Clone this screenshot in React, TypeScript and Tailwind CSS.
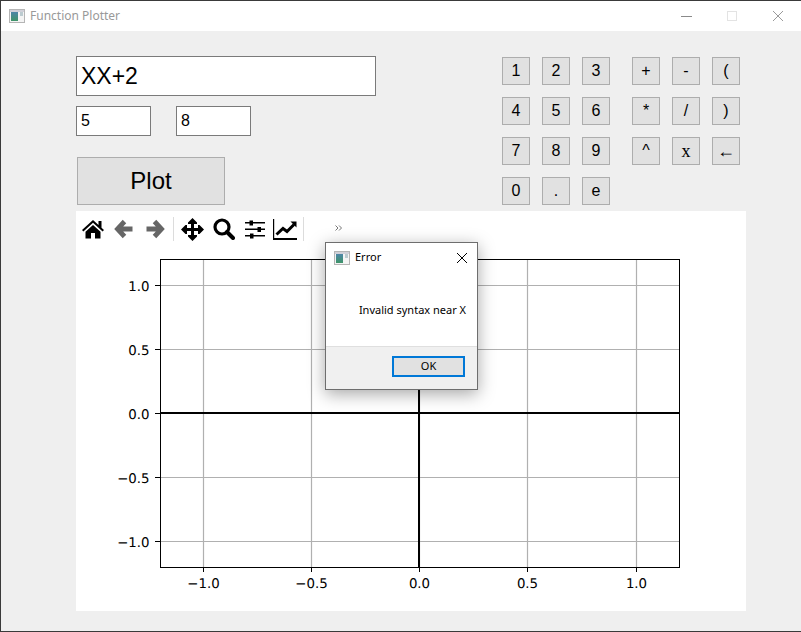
import type { ReactNode } from 'react';

const leftKeys = ['1', '2', '3', '4', '5', '6', '7', '8', '9', '0', '.', 'e'];
const rightKeys = ['+', '-', '(', '*', '/', ')', '^', 'x', '←'];
const xTicks = [
  { x: 203.5, label: '−1.0' },
  { x: 311.5, label: '−0.5' },
  { x: 419.5, label: '0.0' },
  { x: 527.5, label: '0.5' },
  { x: 636.5, label: '1.0' },
];
const yTicks = [
  { y: 285.5, label: '1.0' },
  { y: 349.5, label: '0.5' },
  { y: 413.5, label: '0.0' },
  { y: 477.5, label: '−0.5' },
  { y: 541.5, label: '−1.0' },
];

function WindowIcon() {
  return (
    <svg width="16" height="14" viewBox="0 0 16 14" className="shrink-0">
      <defs>
        <linearGradient id="pane" x1="0" y1="0" x2="0" y2="1">
          <stop offset="0" stopColor="#4d86a8" />
          <stop offset="1" stopColor="#3f9468" />
        </linearGradient>
      </defs>
      <rect x="0.5" y="0.5" width="15" height="13" fill="#f4f4f4" stroke="#b5b5b5" />
      <rect x="1" y="1" width="14" height="2" fill="#d0d0d8" />
      <rect x="2" y="3" width="7" height="9" fill="url(#pane)" />
      <rect x="11" y="3" width="3" height="4" fill="#bccbd0" />
    </svg>
  );
}

function Key({ children, serif }: { children: ReactNode; serif?: boolean }) {
  return (
    <div
      className={`flex h-[28px] w-[28px] items-center justify-center border border-[#adadad] bg-[#e1e1e1] text-black ${
        serif ? "font-['Liberation_Serif',serif] text-[18px]" : 'text-[16px]'
      }`}
    >
      {children}
    </div>
  );
}

function ToolButton({ children }: { children: ReactNode }) {
  return <div className="flex h-[36px] w-[31px] items-center justify-center">{children}</div>;
}

function HomeIcon() {
  return (
    <svg width="22" height="20" viewBox="0 0 22 20" fill="#000">
      <path d="M11 1 L16.5 6 V2 H19.5 V8.7 L22 11 L20.6 12.5 L11 3.8 L1.4 12.5 L0 11 Z" />
      <path d="M11 6 L18.5 12.7 V19.5 H13 V14 H9 V19.5 H3.5 V12.7 Z" />
    </svg>
  );
}

function ArrowIcon({ flip }: { flip?: boolean }) {
  return (
    <svg width="20" height="20" viewBox="0 0 20 20" className={flip ? '-scale-x-100' : ''}>
      <path d="M10.5 2.5 L3.5 10 L10.5 17.5 M4 10 H18.5" fill="none" stroke="#666666" strokeWidth="4.8" />
    </svg>
  );
}

function MoveIcon() {
  return (
    <svg width="23" height="23" viewBox="0 0 23 23" fill="#000">
      <path d="M11.5 0 L16 4.5 V6 H13 V10 H17 V7 H18.5 L23 11.5 L18.5 16 H17 V13 H13 V17 H16 V18.5 L11.5 23 L7 18.5 V17 H10 V13 H6 V16 H4.5 L0 11.5 L4.5 7 H6 V10 H10 V6 H7 V4.5 Z" />
    </svg>
  );
}

function SearchIcon() {
  return (
    <svg width="22" height="22" viewBox="0 0 22 22" fill="none" stroke="#000">
      <circle cx="9" cy="9" r="7" strokeWidth="3.2" />
      <path d="M14 14 L20 20" strokeWidth="4" strokeLinecap="round" />
    </svg>
  );
}

function SlidersIcon() {
  return (
    <svg width="20" height="20" viewBox="0 0 20 20" fill="#000">
      <rect x="0" y="3" width="20" height="1.5" />
      <rect x="0" y="9.5" width="20" height="1.5" />
      <rect x="0" y="16" width="20" height="1.5" />
      <rect x="4.5" y="1.5" width="3.5" height="5" />
      <rect x="12.5" y="8" width="3.5" height="5" />
      <rect x="5" y="14.5" width="3.5" height="5" />
    </svg>
  );
}

function ChartIcon() {
  return (
    <svg width="24" height="21" viewBox="0 0 24 21" fill="#000" className="-ml-px">
      <rect x="0" y="0" width="1.2" height="21" />
      <rect x="0" y="19" width="24" height="2" />
      <path d="M3.5 15.5 L10 9.5 L14 12.5 L21 5.5" fill="none" stroke="#000" strokeWidth="3" />
      <path d="M17.5 2.5 H23.5 V8.5 Z" />
    </svg>
  );
}

function Plot() {
  return (
    <svg width="670" height="364" viewBox="76 247 670 364" className="block font-['DejaVu_Sans',sans-serif]">
      {xTicks.map((t) => (
        <g key={t.x}>
          <line x1={t.x} x2={t.x} y1={259} y2={567} stroke="#b0b0b0" strokeWidth="1.2" />
          <line x1={t.x} x2={t.x} y1={567} y2={572} stroke="#000" />
          <text x={t.x} y={588} textAnchor="middle" fontSize="13.33" textRendering="geometricPrecision" fill="#000">
            {t.label}
          </text>
        </g>
      ))}
      {yTicks.map((t) => (
        <g key={t.y}>
          <line x1={160} x2={680} y1={t.y} y2={t.y} stroke="#b0b0b0" strokeWidth="1.2" />
          <line x1={155} x2={160} y1={t.y} y2={t.y} stroke="#000" />
          <text x={149.5} y={t.y + 5} textAnchor="end" fontSize="13.33" textRendering="geometricPrecision" fill="#000">
            {t.label}
          </text>
        </g>
      ))}
      <line x1={160} x2={680} y1={413} y2={413} stroke="#000" strokeWidth="2" />
      <line x1={419} x2={419} y1={259} y2={567} stroke="#000" strokeWidth="2" />
      <rect x="160.5" y="259.5" width="519" height="308" fill="none" stroke="#000" />
    </svg>
  );
}

function ErrorDialog() {
  return (
    <div className="absolute left-[324px] top-[241px] flex h-[148px] w-[153px] flex-col border border-[#6e6e6e] bg-white font-['Noto_Sans',sans-serif] shadow-[0_4px_16px_rgba(0,0,0,0.35)]">
      <div className="flex h-[29px] items-center px-[8px] text-[11px] text-black">
        <WindowIcon />
        <span className="ml-[5px]">Error</span>
        <svg width="12" height="12" viewBox="0 0 12 12" className="ml-auto mr-[1px]">
          <path d="M1 1 L11 11 M11 1 L1 11" stroke="#000" strokeWidth="1" />
        </svg>
      </div>
      <div className="flex flex-1 justify-end pr-[11px] pt-[30px] text-[11px] text-black">Invalid syntax near X</div>
      <div className="flex h-[43px] items-start justify-end border-t border-[#dfdfdf] bg-[#f0f0f0] pr-[12px] pt-[9px]">
        <div className="flex h-[21px] w-[73px] items-center justify-center border-2 border-[#0078d7] bg-[#e1e1e1] text-[11px] text-black">
          OK
        </div>
      </div>
    </div>
  );
}

export default function App() {
  return (
    <div className="relative flex h-[632px] w-[801px] flex-col overflow-hidden border-b border-l border-t border-[#3a3a3a] bg-[#efefef] font-['Liberation_Sans',sans-serif]">
      <div className="flex h-[30px] shrink-0 items-center bg-white pl-[8px] text-[12px] text-[#999999]">
        <WindowIcon />
        <span className="ml-[5px] font-['Noto_Sans',sans-serif]">Function Plotter</span>
        <div className="ml-auto flex items-center">
          <div className="h-px w-[11px] bg-[#8a8a8a]" />
          <div className="ml-[35px] h-[10px] w-[10px] border border-[#e3e3e3]" />
          <svg width="12" height="12" viewBox="0 0 12 12" className="ml-[35px] mr-[17px]">
            <path d="M1 1 L11 11 M11 1 L1 11" stroke="#9a9a9a" strokeWidth="1" />
          </svg>
        </div>
      </div>

      <div className="flex h-[180px] shrink-0 pl-[75px] pt-[25px]">
        <div className="flex w-[426px] flex-col">
          <div className="flex h-[40px] w-[300px] items-center border border-[#7a7a7a] bg-white pl-[4px] text-[23px] text-black">
            XX+2
          </div>
          <div className="mt-[10px] flex gap-[25px]">
            <div className="flex h-[30px] w-[75px] items-center border border-[#7a7a7a] bg-white pl-[4px] text-[16px] text-black">
              5
            </div>
            <div className="flex h-[30px] w-[75px] items-center border border-[#7a7a7a] bg-white pl-[4px] text-[16px] text-black">
              8
            </div>
          </div>
          <div className="ml-[1px] mt-[21px] flex h-[48px] w-[148px] items-center justify-center border border-[#adadad] bg-[#e1e1e1] text-[24px] text-black">
            Plot
          </div>
        </div>
        <div className="mt-[1px] grid grid-cols-[repeat(3,28px)] content-start gap-[12px]">
          {leftKeys.map((k) => (
            <Key key={k}>{k}</Key>
          ))}
        </div>
        <div className="ml-[22px] mt-[1px] grid grid-cols-[repeat(3,28px)] content-start gap-[12px]">
          {rightKeys.map((k) => (
            <Key key={k} serif={k === 'x' || k === '←'}>
              {k}
            </Key>
          ))}
        </div>
      </div>

      <div className="ml-[75px] h-[400px] w-[670px] shrink-0 bg-white">
        <div className="flex h-[36px] items-center pl-[1px]">
          <ToolButton>
            <HomeIcon />
          </ToolButton>
          <ToolButton>
            <ArrowIcon />
          </ToolButton>
          <ToolButton>
            <ArrowIcon flip />
          </ToolButton>
          <div className="mx-[3px] h-[24px] w-px bg-[#dcdcdc]" />
          <ToolButton>
            <MoveIcon />
          </ToolButton>
          <ToolButton>
            <SearchIcon />
          </ToolButton>
          <ToolButton>
            <SlidersIcon />
          </ToolButton>
          <ToolButton>
            <ChartIcon />
          </ToolButton>
          <div className="ml-[2px] h-[24px] w-px bg-[#dcdcdc]" />
          <svg width="7" height="6" viewBox="0 0 7 6" className="ml-[31px] -mt-[2px]" fill="none" stroke="#777777">
            <path d="M0.5 0.5 L3 3 L0.5 5.5 M4 0.5 L6.5 3 L4 5.5" />
          </svg>
        </div>
        <Plot />
      </div>

      <ErrorDialog />
    </div>
  );
}
